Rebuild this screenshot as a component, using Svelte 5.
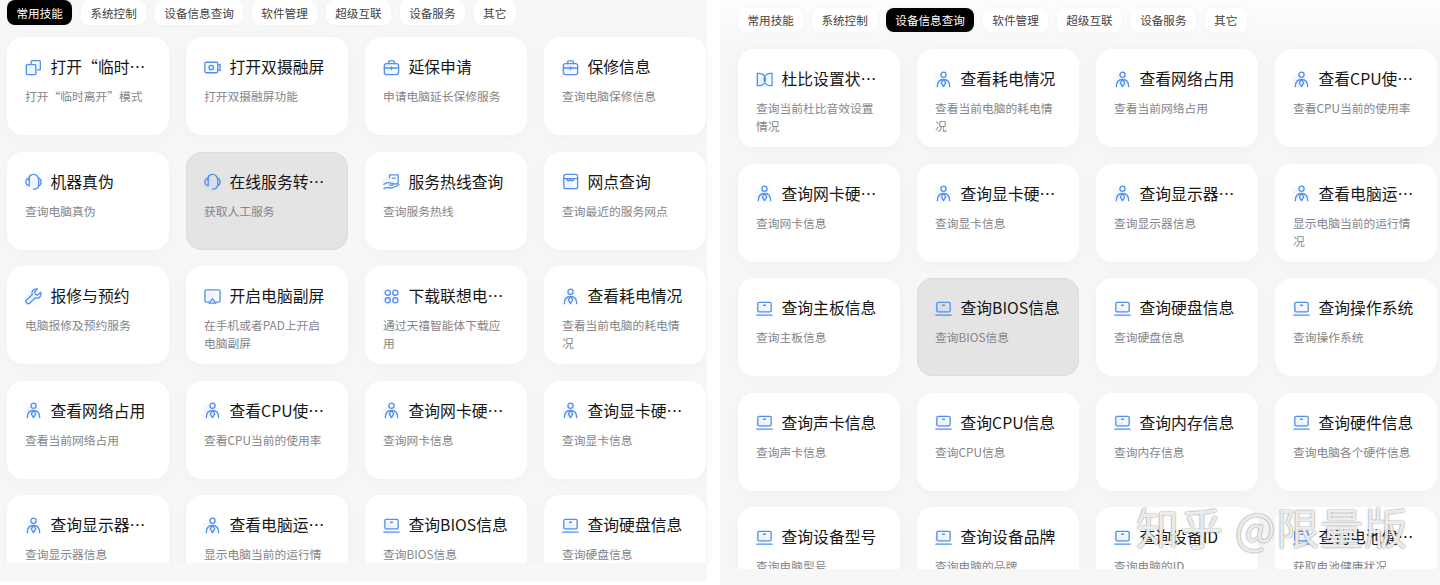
<script>
  const tabs = ['常用技能', '系统控制', '设备信息查询', '软件管理', '超级互联', '设备服务', '其它'];

  const left = [
    ['copy', '打开“临时离开”模式', '打开“临时离开”模式'],
    ['camera', '打开双摄融屏', '打开双摄融屏功能'],
    ['bag', '延保申请', '申请电脑延长保修服务'],
    ['bag', '保修信息', '查询电脑保修信息'],
    ['headset', '机器真伪', '查询电脑真伪'],
    ['headset', '在线服务转人工', '获取人工服务', true],
    ['hand', '服务热线查询', '查询服务热线'],
    ['store', '网点查询', '查询最近的服务网点'],
    ['wrench', '报修与预约', '电脑报修及预约服务'],
    ['screen', '开启电脑副屏', '在手机或者PAD上开启电脑副屏'],
    ['apps', '下载联想电脑应用', '通过天禧智能体下载应用'],
    ['person', '查看耗电情况', '查看当前电脑的耗电情况'],
    ['person', '查看网络占用', '查看当前网络占用'],
    ['person', '查看CPU使用率', '查看CPU当前的使用率'],
    ['person', '查询网卡硬件信息', '查询网卡信息'],
    ['person', '查询显卡硬件信息', '查询显卡信息'],
    ['person', '查询显示器信息', '查询显示器信息'],
    ['person', '查看电脑运行状态', '显示电脑当前的运行情况'],
    ['laptop', '查询BIOS信息', '查询BIOS信息'],
    ['laptop', '查询硬盘信息', '查询硬盘信息'],
  ];

  const right = [
    ['dolby', '杜比设置状态查询', '查询当前杜比音效设置情况'],
    ['person', '查看耗电情况', '查看当前电脑的耗电情况'],
    ['person', '查看网络占用', '查看当前网络占用'],
    ['person', '查看CPU使用率', '查看CPU当前的使用率'],
    ['person', '查询网卡硬件信息', '查询网卡信息'],
    ['person', '查询显卡硬件信息', '查询显卡信息'],
    ['person', '查询显示器信息', '查询显示器信息'],
    ['person', '查看电脑运行状态', '显示电脑当前的运行情况'],
    ['laptop', '查询主板信息', '查询主板信息'],
    ['laptop', '查询BIOS信息', '查询BIOS信息', true],
    ['laptop', '查询硬盘信息', '查询硬盘信息'],
    ['laptop', '查询操作系统', '查询操作系统'],
    ['laptop', '查询声卡信息', '查询声卡信息'],
    ['laptop', '查询CPU信息', '查询CPU信息'],
    ['laptop', '查询内存信息', '查询内存信息'],
    ['laptop', '查询硬件信息', '查询电脑各个硬件信息'],
    ['laptop', '查询设备型号', '查询电脑型号'],
    ['laptop', '查询设备品牌', '查询电脑的品牌'],
    ['laptop', '查询设备ID', '查询电脑的ID'],
    ['laptop', '查询电池健康状况', '获取电池健康状况'],
  ];

  const panels = [
    { cls: 'panel-left', active: 0, items: left },
    { cls: 'panel-right', active: 2, items: right },
  ];
</script>

{#snippet icon(kind)}
  <svg class="icon" viewBox="0 0 20 20" fill="none" stroke="currentColor" stroke-width="1.4" stroke-linecap="round" stroke-linejoin="round">
    {#if kind === 'copy'}
      <rect x="2.5" y="7" width="10" height="10.5" rx="1" />
      <path d="M7.5 6V3.800a1 1 0 0 1 1-1h7.700a1 1 0 0 1 1 1v7.700a1 1 0 0 1-1 1h-1.700" />
    {:else if kind === 'camera'}
      <rect x="2" y="4.5" width="13.5" height="11" rx="1.5" />
      <circle cx="8.7" cy="10" r="2.3" />
      <path d="M15.500 7.500l2.500-.8v6.600l-2.500-.8" />
    {:else if kind === 'bag'}
      <rect x="2.5" y="6" width="15" height="11.5" rx="2.2" />
      <path d="M7 6V4a1 1 0 0 1 1-1h4a1 1 0 0 1 1 1v2M2.500 10.500h15M10 9.500v2.500" />
    {:else if kind === 'headset'}
      <path d="M5 8.500C5 5 7 2.500 10 2.500s5.500 2.500 5.500 6v5c0 3-2 4.500-5.500 4.500" />
      <path d="M5.500 6.500C3.300 7 2 8.600 2 10.500s1.300 3.500 3.500 4zM15.500 6.500c1.600.6 2.500 2.200 2.500 4s-.9 3.400-2.500 4" />
    {:else if kind === 'hand'}
      <path d="M8 6V3h9v7.500a2 2 0 0 1-2 2h-3" />
      <path d="M11 6.500h3M2 13c2-1.800 4-2.300 6-1.500l3 .5c1.200.2 1 1.800-.2 1.800H8M2 17.500c1.500-1 3-1.200 5-.8 3 .5 6 .2 11-3.700" />
    {:else if kind === 'store'}
      <rect x="3" y="2.5" width="14.5" height="15" rx="2" />
      <path d="M3 7h14.500M6.500 7c0 3 3 3 3.300 0 .3 3 3.500 3 3.700 0" />
    {:else if kind === 'wrench'}
      <path d="M17.500 5.500l-3 3-2.500-.8-.8-2.500 3-3c-2.500-.8-5.200.8-5.700 3.200-.2 1-.1 1.900.2 2.700L2.800 13.500a2.300 2.300 0 0 0 3.400 3.300l5.700-5.400c2.800.9 5.400-.6 5.900-3.200.1-.9 0-1.900-.3-2.700z" />
    {:else if kind === 'screen'}
      <path d="M6 16H3.500A1.500 1.500 0 0 1 2 14.500v-10A1.500 1.500 0 0 1 3.500 3h13A1.500 1.500 0 0 1 18 4.500v10a1.500 1.500 0 0 1-1.500 1.500H14" />
      <path d="M10 12.500l3.500 4.500h-7z" />
    {:else if kind === 'apps'}
      <circle cx="6" cy="6" r="2.7" />
      <circle cx="14" cy="6" r="2.7" />
      <circle cx="6" cy="14" r="2.7" />
      <circle cx="14" cy="14" r="2.7" />
    {:else if kind === 'person'}
      <circle cx="10" cy="5" r="2.7" />
      <path d="M3.500 17.500c0-4.800 2.500-7.500 6.500-7.500s6.500 2.700 6.500 7.500" />
      <path d="M10 10l-2.300 3.500L10 17.500l2.300-4z" />
    {:else if kind === 'laptop'}
      <rect x="3" y="3.5" width="14" height="10" rx="1.3" />
      <path d="M2 17h16M9 6.500h2" stroke-width="1.5" />
    {:else if kind === 'dolby'}
      <path d="M2.500 3.500h2a6.500 6.500 0 0 1 0 13h-2zM18 3.500h-2a6.500 6.500 0 0 0 0 13h2z" />
    {/if}
  </svg>
{/snippet}

<div class="page">
  {#each panels as panel}
    <section class="panel {panel.cls}">
      <nav class="tabs">
        {#each tabs as tab, i}
          <span class="tab" class:active={i === panel.active}>{tab}</span>
        {/each}
      </nav>
      <div class="viewport">
        <div class="grid">
          {#each panel.items as [kind, title, desc, hover]}
            <article class="card" class:hover>
              <div class="head">
                <span class="icon-wrap">{@render icon(kind)}</span>
                <span class="title">{title}</span>
              </div>
              <p class="desc">{desc}</p>
            </article>
          {/each}
        </div>
      </div>
    </section>
  {/each}
  <div class="watermark">知乎 @限量版</div>
</div>

<style>
  :global(body) {
    margin: 0;
    background: #fff;
    overflow: hidden;
  }

  .page {
    position: relative;
    display: flex;
    gap: 13px;
    width: 1440px;
    height: 585px;
    overflow: hidden;
    font-family: 'Noto Sans CJK SC', 'Noto Sans', sans-serif;
  }

  .panel {
    display: flex;
    flex-direction: column;
    box-sizing: border-box;
    background: #f7f7f7;
  }

  .panel-left {
    width: 707px;
    height: 582px;
    padding-left: 7px;
  }

  .panel-right {
    width: 720px;
    height: 585px;
    padding-left: 18px;
    background: linear-gradient(#fdfdfd 0, #f7f7f7 45px);
  }

  .tabs {
    display: flex;
    gap: 8.5px;
    flex-shrink: 0;
  }

  .panel-left .tabs {
    height: 25px;
    margin: 0 0 12px;
  }

  .panel-right .tabs {
    height: 24px;
    margin: 8px 0 17px;
  }

  .tab {
    display: flex;
    align-items: center;
    padding: 0 9.5px;
    border-radius: 8px;
    background: #fff;
    color: #444;
    font-size: 11.6px;
    box-shadow: 0 0 4px rgba(0, 0, 0, 0.03);
  }

  .tab.active {
    background: #000;
    color: #fff;
  }

  /* clips the last row, bleed area keeps the card shadows visible */
  .viewport {
    overflow: hidden;
    margin: -12px -20px 0;
    padding: 12px 20px 0;
  }

  .panel-left .viewport {
    height: 526px;
  }

  .panel-right .viewport {
    height: 520px;
  }

  .grid {
    display: grid;
    grid-template-columns: repeat(4, 162px);
    column-gap: 17px;
    row-gap: 16.5px;
  }

  .card {
    box-sizing: border-box;
    height: 98px;
    padding: 20px 20px 0 18px;
    border-radius: 16px;
    background: #fff;
    box-shadow: 0 3px 18px rgba(0, 0, 0, 0.03);
  }

  .card.hover {
    background: #e4e4e4;
    box-shadow: inset 0 0 0 1px #dcdcdc;
  }

  .head {
    display: flex;
    align-items: center;
    gap: 7.5px;
    height: 20px;
    margin: 0 -5px 0 -1px;
  }

  .icon-wrap {
    display: flex;
    flex-shrink: 0;
    width: 19px;
    height: 19px;
    color: #5590e8;
    background: radial-gradient(circle at 40% 55%, rgba(120, 170, 255, 0.16), transparent 70%);
  }

  .icon {
    width: 19px;
    height: 19px;
  }

  .title {
    flex: 1;
    min-width: 0;
    overflow: hidden;
    white-space: nowrap;
    text-overflow: ellipsis;
    color: #161616;
    font-size: 15.8px;
    line-height: 20px;
  }

  .desc {
    margin: 10px 0 0;
    color: #85858a;
    font-size: 11.75px;
    line-height: 18px;
  }

  .watermark {
    position: absolute;
    left: 1136px;
    top: 498px;
    color: rgba(255, 255, 255, 0.88);
    font-size: 43px;
    letter-spacing: 1px;
    line-height: 56px;
    white-space: pre;
    text-shadow: 0 0 1.5px rgba(60, 60, 60, 0.85);
  }
</style>
